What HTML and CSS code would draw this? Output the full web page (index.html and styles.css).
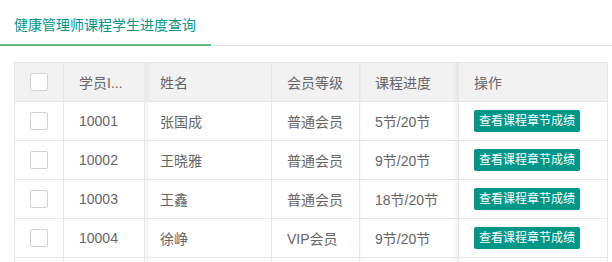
FILE: index.html
```html
<!DOCTYPE html>
<html lang="zh-CN">
<head>
    <meta charset="UTF-8">
    <meta name="viewport" content="width=device-width, initial-scale=1.0">
    <title>学生进度查询</title>
    <link rel="stylesheet" href="styles.css">
</head>
<body>
    <div class="tab">
        <ul class="tab-title">
            <li class="tab-item active">健康管理师课程学生进度查询</li>
        </ul>
    </div>

    <table class="grid">
        <colgroup>
            <col class="c-check">
            <col class="c-id">
            <col class="c-name">
            <col class="c-level">
            <col class="c-progress">
            <col class="c-op">
        </colgroup>
        <thead>
            <tr>
                <th class="center"><span class="checkbox"></span></th>
                <th>学员I...</th>
                <th class="shadow-left">姓名</th>
                <th>会员等级</th>
                <th class="shadow-right">课程进度</th>
                <th>操作</th>
            </tr>
        </thead>
        <tbody>
            <tr>
                <td class="center"><span class="checkbox"></span></td>
                <td>10001</td>
                <td class="shadow-left">张国成</td>
                <td>普通会员</td>
                <td class="shadow-right">5节/20节</td>
                <td><a class="btn">查看课程章节成绩</a></td>
            </tr>
            <tr>
                <td class="center"><span class="checkbox"></span></td>
                <td>10002</td>
                <td class="shadow-left">王晓雅</td>
                <td>普通会员</td>
                <td class="shadow-right">9节/20节</td>
                <td><a class="btn">查看课程章节成绩</a></td>
            </tr>
            <tr>
                <td class="center"><span class="checkbox"></span></td>
                <td>10003</td>
                <td class="shadow-left">王鑫</td>
                <td>普通会员</td>
                <td class="shadow-right">18节/20节</td>
                <td><a class="btn">查看课程章节成绩</a></td>
            </tr>
            <tr>
                <td class="center"><span class="checkbox"></span></td>
                <td>10004</td>
                <td class="shadow-left">徐峥</td>
                <td>VIP会员</td>
                <td class="shadow-right">9节/20节</td>
                <td><a class="btn">查看课程章节成绩</a></td>
            </tr>
            <tr>
                <td></td>
                <td></td>
                <td class="shadow-left"></td>
                <td></td>
                <td class="shadow-right"></td>
                <td></td>
            </tr>
        </tbody>
    </table>
</body>
</html>
```

FILE: styles.css
```css
body {
    margin: 0;
    font-family: "Liberation Sans", "Noto Sans CJK SC", sans-serif;
    font-size: 14px;
    color: #666;
    background: #fff;
    overflow: hidden;
}

.tab-title {
    list-style: none;
    margin: 5px 0 0;
    padding: 0;
    height: 40px;
    display: flex;
    border-bottom: 1px solid #e2e2e2;
}

.tab-item {
    position: relative;
    padding: 0 15px 0 14px;
    line-height: 40px;
    color: #009688;
}

.tab-item.active::after {
    content: '';
    position: absolute;
    left: 0;
    right: 0;
    bottom: -1px;
    height: 2px;
    background: #5FB878;
}

.grid {
    margin: 16px 0 0 14px;
    width: 593px;
    border-collapse: collapse;
    table-layout: fixed;
}

.c-check { width: 49px; }
.c-id { width: 81px; }
.c-name { width: 127px; }
.c-level { width: 88px; }
.c-progress { width: 99px; }
.c-op { width: 149px; }

.grid th,
.grid td {
    height: 38px;
    padding: 0 15px;
    border: 1px solid #e6e6e6;
    text-align: left;
    font-weight: normal;
    white-space: nowrap;
    overflow: hidden;
}

.grid th {
    background-color: #f2f2f2;
}

.grid .center {
    padding: 0;
    text-align: center;
}

.shadow-left {
    background-image: linear-gradient(to right, rgba(0, 0, 0, 0.05), rgba(0, 0, 0, 0) 6px);
}

.shadow-right {
    background-image: linear-gradient(to left, rgba(0, 0, 0, 0.05), rgba(0, 0, 0, 0) 6px);
}

.checkbox {
    display: inline-block;
    width: 16px;
    height: 16px;
    border: 1px solid #d2d2d2;
    border-radius: 2px;
    background: #fff;
    vertical-align: middle;
}

.btn {
    display: inline-block;
    height: 22px;
    line-height: 22px;
    padding: 0 5px;
    font-size: 12px;
    color: #fff;
    background-color: #009688;
    border-radius: 2px;
    vertical-align: middle;
}
```
